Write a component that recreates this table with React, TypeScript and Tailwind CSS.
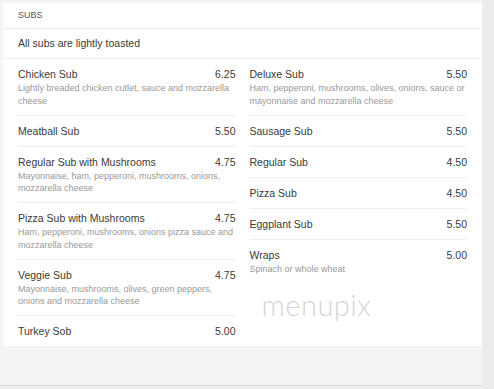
import React from "react";

type Item = { name: string; price: string; desc?: string[] };

const left: Item[] = [
  { name: "Chicken Sub", price: "6.25", desc: ["Lightly breaded chicken cutlet, sauce and mozzarella", "cheese"] },
  { name: "Meatball Sub", price: "5.50" },
  { name: "Regular Sub with Mushrooms", price: "4.75", desc: ["Mayonnaise, ham, pepperoni, mushrooms, onions,", "mozzarella cheese"] },
  { name: "Pizza Sub with Mushrooms", price: "4.75", desc: ["Ham, pepperoni, mushrooms, onions pizza sauce and", "mozzarella cheese"] },
  { name: "Veggie Sub", price: "4.75", desc: ["Mayonnaise, mushrooms, olives, green peppers,", "onions and mozzarella cheese"] },
  { name: "Turkey Sob", price: "5.00" },
];

const right: Item[] = [
  { name: "Deluxe Sub", price: "5.50", desc: ["Ham, pepperoni, mushrooms, olives, onions, sauce or", "mayonnaise and mozzarella cheese"] },
  { name: "Sausage Sub", price: "5.50" },
  { name: "Regular Sub", price: "4.50" },
  { name: "Pizza Sub", price: "4.50" },
  { name: "Eggplant Sub", price: "5.50" },
  { name: "Wraps", price: "5.00", desc: ["Spinach or whole wheat"] },
];

function Row({ item, last }: { item: Item; last?: boolean }) {
  return (
    <div className={last ? "py-[7px]" : "py-[7px] border-b border-[#efefef]"}>
      <div className="flex justify-between text-[10.5px] leading-[16px] text-[#3a3a3a]">
        <span>{item.name}</span>
        <span>{item.price}</span>
      </div>
      {item.desc?.map((line) => (
        <div key={line} className="text-[9px] leading-[12.75px] text-[#999] whitespace-nowrap">
          {line}
        </div>
      ))}
    </div>
  );
}

export default function App() {
  return (
    <div
      className="w-[494px] h-[389px] flex bg-[#f4f4f7] overflow-hidden"
      style={{ fontFamily: '"Liberation Sans", Arial, sans-serif' }}
    >
      <div className="w-[482px] flex flex-col">
        <div className="pt-[3px] pl-[3px]">
          <div className="bg-white w-[479px] h-[343px]">
            {/* Header */}
            <div className="h-[26px] border-b border-[#ececec] px-[15px] flex items-center text-[9px] text-[#555] uppercase">
              Subs
            </div>
            <div className="h-[30px] border-b border-[#ececec] px-[15px] flex items-center text-[10.5px] text-[#3a3a3a]">
              All subs are lightly toasted
            </div>

            {/* Items */}
            <div className="grid grid-cols-2 gap-x-[14px] px-[15px]">
              <div>
                {left.map((it, i) => (
                  <Row key={it.name} item={it} last={i === left.length - 1} />
                ))}
              </div>
              <div>
                {right.map((it, i) => (
                  <Row key={it.name} item={it} last={i === right.length - 1} />
                ))}
                <div
                  className="pl-[12px] pt-[8px] text-[29px] leading-[30px] font-light text-[#d6d6d6] tracking-[0.5px]"
                  style={{ fontFamily: "Lato, sans-serif" }}
                >
                  menupix
                </div>
              </div>
            </div>
          </div>
        </div>
        <div className="flex-1" />
        <div className="h-[4px] border-t border-[#d9d9dc] bg-[#f0f0f2]" />
      </div>
      <div className="w-[12px] bg-[#ececef]" />
    </div>
  );
}
